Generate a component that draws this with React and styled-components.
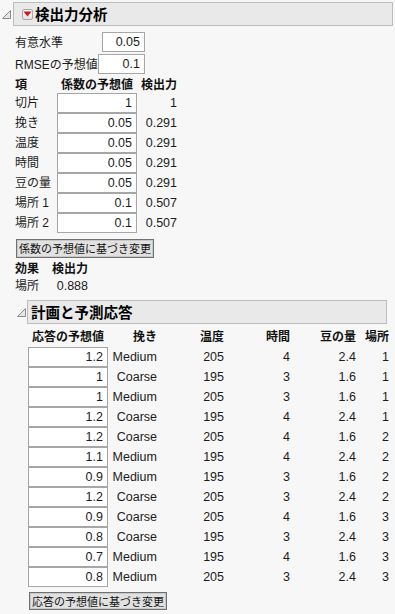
import React from 'react';
import styled, { createGlobalStyle } from 'styled-components';

const GlobalStyle = createGlobalStyle`
  html, body { margin: 0; padding: 0; background: #f7f7f7; }
  body {
    font-family: "Liberation Sans", "Noto Sans CJK JP", sans-serif;
    font-size: 12px;
    color: #1c1c1c;
  }
`;

const params = [
  { label: '有意水準', value: '0.05', width: 43 },
  { label: 'RMSEの予想値', value: '0.1', width: 47 },
];

const coefs = [
  ['切片', '1', '1'],
  ['挽き', '0.05', '0.291'],
  ['温度', '0.05', '0.291'],
  ['時間', '0.05', '0.291'],
  ['豆の量', '0.05', '0.291'],
  ['場所 1', '0.1', '0.507'],
  ['場所 2', '0.1', '0.507'],
];

const design = [
  ['1.2', 'Medium', '205', '4', '2.4', '1'],
  ['1', 'Coarse', '195', '3', '1.6', '1'],
  ['1', 'Medium', '205', '3', '1.6', '1'],
  ['1.2', 'Coarse', '195', '4', '2.4', '1'],
  ['1.2', 'Coarse', '205', '4', '1.6', '2'],
  ['1.1', 'Medium', '195', '4', '2.4', '2'],
  ['0.9', 'Medium', '195', '3', '1.6', '2'],
  ['1.2', 'Coarse', '205', '3', '2.4', '2'],
  ['0.9', 'Coarse', '205', '4', '1.6', '3'],
  ['0.8', 'Coarse', '195', '3', '2.4', '3'],
  ['0.7', 'Medium', '195', '4', '1.6', '3'],
  ['0.8', 'Medium', '205', '3', '2.4', '3'],
];

function Disclosure() {
  return (
    <svg width="9" height="9" viewBox="0 0 9 9">
      <polygon points="8.5,0.5 8.5,8.5 0.5,8.5" fill="#e6e6e6" stroke="#8c8c8c" strokeWidth="1" />
    </svg>
  );
}

function RedMenu() {
  return (
    <MenuButton>
      <svg width="9" height="6" viewBox="0 0 9 6">
        <polygon points="0.5,0.5 8.5,0.5 4.5,5.5" fill="#d4141c" />
      </svg>
    </MenuButton>
  );
}

function App() {
  return (
    <Page>
      <GlobalStyle />
      <Outline>
        <OutlineHead>
          <Twisty $w={13}><Disclosure /></Twisty>
          <TitleBar $pad={8}>
            <RedMenu />
            <Title>検出力分析</Title>
          </TitleBar>
        </OutlineHead>
        <Body $indent={15}>
          <Params>
            {params.map((p) => (
              <ParamRow key={p.label}>
                <span>{p.label}</span>
                <Box defaultValue={p.value} style={{ width: p.width }} readOnly />
              </ParamRow>
            ))}
          </Params>

          <CoefGrid>
            <Head>項</Head>
            <Head $align="center">係数の予想値</Head>
            <Head $align="right">検出力</Head>
            {coefs.map(([term, est, power]) => (
              <React.Fragment key={term}>
                <Cell>{term}</Cell>
                <Box defaultValue={est} readOnly />
                <Cell $align="right" $num>{power}</Cell>
              </React.Fragment>
            ))}
          </CoefGrid>

          <Button $top={6}>係数の予想値に基づき変更</Button>

          <EffectGrid>
            <Head>効果</Head>
            <Head $align="right">検出力</Head>
            <Cell $tall>場所</Cell>
            <Cell $align="right" $num $tall>0.888</Cell>
          </EffectGrid>

          <Outline $top={4}>
            <OutlineHead>
              <Twisty $w={12}><Disclosure /></Twisty>
              <TitleBar $pad={3}>
                <Title>計画と予測応答</Title>
              </TitleBar>
            </OutlineHead>
            <Body $indent={13}>
              <DesignGrid>
                <Head $align="center">応答の予想値</Head>
                <Head $align="right">挽き</Head>
                <Head $align="right">温度</Head>
                <Head $align="right">時間</Head>
                <Head $align="right">豆の量</Head>
                <Head $align="right">場所</Head>
                {design.map((row, i) => (
                  <React.Fragment key={i}>
                    <Box defaultValue={row[0]} readOnly />
                    {row.slice(1).map((v, j) => (
                      <Cell key={j} $align="right" $num>{v}</Cell>
                    ))}
                  </React.Fragment>
                ))}
              </DesignGrid>
              <Button $top={5} $h={18}>応答の予想値に基づき変更</Button>
            </Body>
          </Outline>
        </Body>
      </Outline>
    </Page>
  );
}

const Page = styled.div`
  width: 395px;
  height: 614px;
  overflow: hidden;
  padding-top: 2px;
  box-sizing: border-box;
`;

const Outline = styled.section`
  display: flex;
  flex-direction: column;
  margin-top: ${(p) => p.$top || 0}px;
`;

const OutlineHead = styled.div`
  display: flex;
  align-items: center;
  padding-right: 2px;
`;

const Twisty = styled.div`
  width: ${(p) => p.$w}px;
  display: flex;
  align-items: center;
  justify-content: flex-start;
  padding-left: 2px;
  box-sizing: border-box;
`;

const TitleBar = styled.div`
  flex: 1;
  height: 24px;
  box-sizing: border-box;
  border: 1px solid #bdbdbd;
  background: #e9e9e9;
  display: flex;
  align-items: center;
  gap: 2px;
  padding-left: ${(p) => p.$pad}px;
`;

const MenuButton = styled.span`
  width: 11px;
  height: 11px;
  box-sizing: border-box;
  border: 1px solid #a9a9a9;
  border-radius: 2px;
  background: linear-gradient(#fdfdfd, #e2e2e2);
  display: flex;
  align-items: center;
  justify-content: center;
`;

const Title = styled.span`
  font-family: "Noto Sans CJK JP", sans-serif;
  font-weight: bold;
  font-size: 14.5px;
  line-height: 20px;
  color: #000;
`;

const Body = styled.div`
  display: flex;
  flex-direction: column;
  align-items: flex-start;
  padding-left: ${(p) => p.$indent}px;
`;

const Params = styled.div`
  display: flex;
  flex-direction: column;
  gap: 3px;
  margin-top: 6px;
  width: 130px;
`;

const ParamRow = styled.div`
  display: flex;
  justify-content: space-between;
  align-items: center;
  height: 19px;
`;

const Box = styled.input`
  width: 100%;
  height: 20px;
  box-sizing: border-box;
  margin: 0;
  border: 1px solid #a6a6a6;
  background: #fff;
  text-align: right;
  padding: 0 4px 0 0;
  font-family: "Liberation Sans", sans-serif;
  font-size: 12.5px;
  color: #1c1c1c;
  outline: none;
  border-radius: 0;
`;

const Head = styled.div`
  font-weight: bold;
  font-size: 12px;
  height: 16px;
  line-height: 16px;
  text-align: ${(p) => p.$align || 'left'};
  white-space: nowrap;
  color: #111;
`;

const Cell = styled.div`
  height: ${(p) => (p.$tall ? 19 : 20)}px;
  line-height: ${(p) => (p.$tall ? 19 : 20)}px;
  text-align: ${(p) => p.$align || 'left'};
  font-size: ${(p) => (p.$num ? 12.5 : 12)}px;
  white-space: nowrap;
`;

const CoefGrid = styled.div`
  display: grid;
  grid-template-columns: 42px 80px 40px;
  margin-top: 4px;
`;

const EffectGrid = styled.div`
  display: grid;
  grid-template-columns: 37px 36px;
  margin-top: 3px;
`;

const DesignGrid = styled.div`
  display: grid;
  grid-template-columns: 80px 49px 67px 66px 66px 33px;
  grid-template-rows: 17px;
  margin-top: 6px;
  & > ${Head} {
    height: 17px;
    line-height: 15px;
  }
`;

const Button = styled.button`
  margin: ${(p) => p.$top}px 0 0 1px;
  height: ${(p) => p.$h || 19}px;
  padding: 0 2px;
  border: 1px solid #707070;
  box-shadow: inset 0 0 0 1px #c9c9c9;
  background: #e1e1e1;
  border-radius: 0;
  font-family: "Noto Sans CJK JP", sans-serif;
  font-size: 11px;
  line-height: 15px;
  color: #111;
  white-space: nowrap;
`;

export default App;
